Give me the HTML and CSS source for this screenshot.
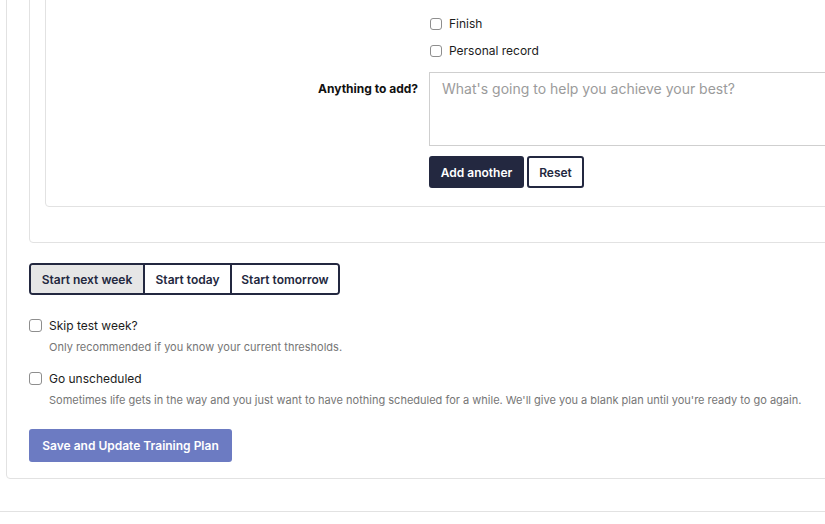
FILE: index.html
```html
<!DOCTYPE html>
<html lang="en">
<head>
<meta charset="utf-8">
<title>Training Plan</title>
<link rel="stylesheet" href="styles.css">
</head>
<body>
<div class="page">
  <div class="card outer">
    <div class="card middle">
      <div class="card inner">
        <div class="form-row">
          <div class="label-col"></div>
          <div class="control-col">
            <label class="check-row"><input type="checkbox" class="cb"><span>Finish</span></label>
            <label class="check-row"><input type="checkbox" class="cb"><span>Personal record</span></label>
          </div>
        </div>
        <div class="form-row notes-row">
          <div class="label-col"><label class="field-label" for="notes">Anything to add?</label></div>
          <div class="control-col">
            <textarea id="notes" class="notes" placeholder="What's going to help you achieve your best?"></textarea>
            <div class="btn-row">
              <button class="btn btn-dark">Add another</button>
              <button class="btn btn-outline">Reset</button>
            </div>
          </div>
        </div>
      </div>
    </div>

    <div class="segmented">
      <button class="seg active">Start next week</button>
      <button class="seg">Start today</button>
      <button class="seg">Start tomorrow</button>
    </div>

    <div class="option">
      <label class="opt-row"><input type="checkbox" class="cb"><span>Skip test week?</span></label>
      <p class="help">Only recommended if you know your current thresholds.</p>
    </div>
    <div class="option">
      <label class="opt-row"><input type="checkbox" class="cb"><span>Go unscheduled</span></label>
      <p class="help">Sometimes life gets in the way and you just want to have nothing scheduled for a while. We'll give you a blank plan until you're ready to go again.</p>
    </div>

    <button class="btn-save">Save and Update Training Plan</button>
  </div>
  <div class="footer-line"></div>
</div>
</body>
</html>
```

FILE: styles.css
```css
* { box-sizing: border-box; }
html, body {
  margin: 0;
  padding: 0;
  background: #ffffff;
  overflow: hidden;
}
body {
  font-family: Inter, "Noto Sans", "Liberation Sans", sans-serif;
  color: #1c1c1c;
  width: 825px;
  height: 524px;
}
.page {
  margin-top: -20px;
  padding-left: 6px;
}
.card {
  border: 1px solid #e2e2e2;
  border-radius: 4px;
  background: #fff;
}
.outer {
  width: 1000px;
  padding: 0 0 16px 22px;
}
.middle {
  padding: 0 0 35px 15px;
}
.inner {
  padding: 27px 0 18px 0;
}
.form-row {
  display: grid;
  grid-template-columns: 372px 1fr;
  column-gap: 11px;
}
.label-col {
  text-align: right;
}
.check-row {
  display: flex;
  align-items: center;
  gap: 7px;
  height: 27px;
  font-size: 12px;
  color: #1c1c1c;
}
.cb {
  appearance: none;
  -webkit-appearance: none;
  width: 12px;
  height: 12px;
  margin: 0 0 0 1px;
  border: 1px solid #8e8e8e;
  border-radius: 3px;
  background: #fff;
  flex: none;
}
.notes-row {
  margin-top: 8px;
}
.field-label {
  display: block;
  padding-top: 8px;
  line-height: 18px;
  font-size: 12px;
  font-weight: 700;
  color: #111;
}
.notes {
  display: block;
  width: 500px;
  height: 74px;
  border: 1px solid #cfcfcf;
  border-radius: 0;
  padding: 7px 12px;
  font-family: Inter, "Noto Sans", "Liberation Sans", sans-serif;
  font-size: 14px;
  line-height: 18px;
  resize: none;
  outline: none;
}
.notes::placeholder {
  color: #9b9b9b;
}
.btn-row {
  display: flex;
  gap: 3px;
  margin-top: 10px;
}
.btn {
  height: 32px;
  border-radius: 3px;
  font-family: Inter, "Noto Sans", "Liberation Sans", sans-serif;
  font-size: 12px;
  font-weight: 600;
  cursor: pointer;
  padding: 0;
  white-space: nowrap;
}
.btn-dark {
  width: 95px;
  background: #232840;
  border: 2px solid #232840;
  color: #fff;
}
.btn-outline {
  width: 57px;
  background: #fff;
  border: 2px solid #232840;
  color: #232840;
}
.segmented {
  display: inline-flex;
  margin-top: 20px;
  border: 2px solid #232840;
  border-radius: 4px;
  overflow: hidden;
  height: 32px;
}
.seg {
  height: 28px;
  border: 0;
  border-left: 2px solid #232840;
  background: #fff;
  color: #232840;
  font-family: Inter, "Noto Sans", "Liberation Sans", sans-serif;
  font-size: 12px;
  font-weight: 600;
  padding: 0;
  white-space: nowrap;
}
.seg:first-child {
  border-left: 0;
  width: 112px;
}
.seg:nth-child(2) { width: 87px; }
.seg:nth-child(3) { width: 108px; }
.seg.active {
  background: #e6e6e6;
}
.option {
  margin-top: 21px;
}
.option + .option {
  margin-top: 14px;
}
.opt-row {
  display: flex;
  align-items: center;
  gap: 7px;
  height: 18px;
  font-size: 12px;
  color: #1c1c1c;
}
.opt-row .cb {
  margin-left: 0;
  width: 13px;
  height: 13px;
}
.help {
  margin: 5px 0 0 20px;
  font-size: 11px;
  line-height: 16px;
  color: #767676;
}
.btn-save {
  display: block;
  margin-top: 21px;
  width: 203px;
  height: 33px;
  background: #6c7bc2;
  border: 0;
  border-radius: 3px;
  color: #fff;
  font-family: Inter, "Noto Sans", "Liberation Sans", sans-serif;
  font-size: 12px;
  font-weight: 600;
}
.footer-line {
  margin: 32px 0 0 -6px;
  border-top: 1px solid #e2e2e2;
  width: 825px;
}
```
